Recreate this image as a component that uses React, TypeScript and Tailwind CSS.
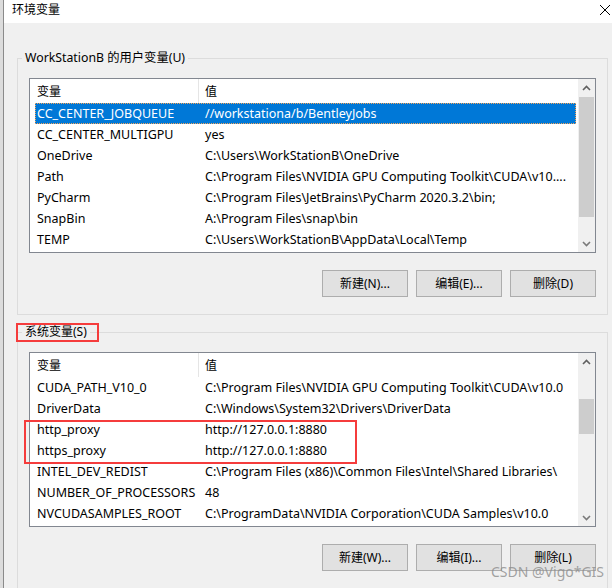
import React from 'react';

type Row = { name: string; value: string; selected?: boolean };

const userRows: Row[] = [
    { name: 'CC_CENTER_JOBQUEUE', value: '//workstationa/b/BentleyJobs', selected: true },
    { name: 'CC_CENTER_MULTIGPU', value: 'yes' },
    { name: 'OneDrive', value: 'C:\\Users\\WorkStationB\\OneDrive' },
    { name: 'Path', value: 'C:\\Program Files\\NVIDIA GPU Computing Toolkit\\CUDA\\v10....' },
    { name: 'PyCharm', value: 'C:\\Program Files\\JetBrains\\PyCharm 2020.3.2\\bin;' },
    { name: 'SnapBin', value: 'A:\\Program Files\\snap\\bin' },
    { name: 'TEMP', value: 'C:\\Users\\WorkStationB\\AppData\\Local\\Temp' },
];

const systemTop: Row[] = [
    { name: 'CUDA_PATH_V10_0', value: 'C:\\Program Files\\NVIDIA GPU Computing Toolkit\\CUDA\\v10.0' },
    { name: 'DriverData', value: 'C:\\Windows\\System32\\Drivers\\DriverData' },
];

const systemProxy: Row[] = [
    { name: 'http_proxy', value: 'http://127.0.0.1:8880' },
    { name: 'https_proxy', value: 'http://127.0.0.1:8880' },
];

const systemBottom: Row[] = [
    { name: 'INTEL_DEV_REDIST', value: 'C:\\Program Files (x86)\\Common Files\\Intel\\Shared Libraries\\' },
    { name: 'NUMBER_OF_PROCESSORS', value: '48' },
    { name: 'NVCUDASAMPLES_ROOT', value: 'C:\\ProgramData\\NVIDIA Corporation\\CUDA Samples\\v10.0' },
];

const ListRow = ({ row }: { row: Row }) => (
    <div
        className={
            row.selected
                ? 'ml-[5px] mr-[2px] h-[21px] pt-[2px] flex items-center text-[12.5px] bg-[#0078d7] text-white outline outline-1 outline-dotted outline-[#f5a55a] -outline-offset-1'
                : 'ml-[5px] mr-[2px] h-[21px] pt-[2px] flex items-center text-[12.5px] text-black'
        }
    >
        <div className="w-[168px] shrink-0 pl-[2px] whitespace-nowrap overflow-hidden">{row.name}</div>
        <div className="flex-1 min-w-0 pl-[2px] whitespace-nowrap overflow-hidden">{row.value}</div>
    </div>
);

const Chevron = ({ down }: { down?: boolean }) => (
    <svg width="9" height="6" viewBox="0 0 9 6">
        <path
            d={down ? 'M1 1 L4.5 4.5 L8 1' : 'M1 5 L4.5 1.5 L8 5'}
            fill="none"
            stroke={down ? '#7a7a7a' : '#606060'}
            strokeWidth="1.6"
        />
    </svg>
);

const ScrollBar = ({ offset, size }: { offset: string; size: string }) => (
    <div className="w-[17px] shrink-0 bg-[#f0f0f0] flex flex-col">
        <div className="h-[17px] flex items-center justify-center">
            <Chevron />
        </div>
        <div className={`mx-[1px] bg-[#cdcdcd] ${offset} ${size}`}></div>
        <div className="flex-1"></div>
        <div className="h-[17px] flex items-center justify-center">
            <Chevron down />
        </div>
    </div>
);

const VarList = ({ children, scroll }: { children: React.ReactNode; scroll: React.ReactNode }) => (
    <div className="mt-[12px] h-[175px] border border-[#828790] bg-white flex">
        <div className="flex-1 min-w-0 flex flex-col">
            <div className="h-[24px] shrink-0 flex items-center">
                <div className="w-[169px] h-full pl-[7px] pt-[1px] flex items-center border-r border-[#e5e5e5]">变量</div>
                <div className="pl-[6px] pt-[1px]">值</div>
            </div>
            {children}
        </div>
        {scroll}
    </div>
);

const Buttons = ({ labels }: { labels: string[] }) => (
    <div className="mt-[17px] flex justify-end gap-[8px]">
        {labels.map((l) => (
            <button
                key={l}
                className="w-[86px] h-[27px] border border-[#adadad] bg-[#e1e1e1] text-[12px] text-black flex items-center justify-center"
            >
                {l}
            </button>
        ))}
    </div>
);

const App: React.FC = () => {
    return (
        <div className="relative w-[612px] h-[588px] overflow-hidden flex bg-[#f0f0f0] text-[12px] text-black font-['Noto_Sans','Noto_Sans_CJK_SC',sans-serif]">
            <div className="w-[3px] shrink-0 bg-[#dcdcdc]"></div>
            <div className="w-px shrink-0 bg-[#8a8a8a]"></div>

            <div className="flex-1 flex flex-col">
                {/* title bar */}
                <div className="h-[23px] shrink-0 bg-white flex items-center justify-between pl-[8px] pr-[1px] pb-[4px]">
                    <span className="leading-[16px]">环境变量</span>
                    <svg width="12" height="12" viewBox="0 0 12 12">
                        <path d="M1 1 L11 11 M11 1 L1 11" stroke="#000" strokeWidth="1" fill="none" />
                    </svg>
                </div>

                <div className="flex-1 pl-[13px] pr-[4px] pt-[27px]">
                    {/* user variables */}
                    <fieldset className="border border-[#dcdcdc] pb-[17px]">
                        <legend className="ml-[4px] px-[3px] leading-[16px] text-[12.3px]">WorkStationB 的用户变量(U)</legend>
                        <div className="mx-[11px]">
                            <VarList scroll={<ScrollBar offset="mt-[1px]" size="h-[120px]" />}>
                                {userRows.map((r) => (
                                    <ListRow key={r.name} row={r} />
                                ))}
                            </VarList>
                            <Buttons labels={['新建(N)...', '编辑(E)...', '删除(D)']} />
                        </div>
                    </fieldset>

                    {/* system variables */}
                    <fieldset className="mt-[9px] border border-[#dcdcdc] pb-[17px]">
                        <legend className="ml-[4px] px-[3px] leading-[16px]">
                            <span className="relative">
                                系统变量(S)
                                <span className="absolute left-[-9px] top-[0px] w-[83px] h-[19px] border-2 border-[#f53c3c]"></span>
                            </span>
                        </legend>
                        <div className="mx-[11px]">
                            <VarList scroll={<ScrollBar offset="mt-[29px]" size="h-[35px]" />}>
                                {systemTop.map((r) => (
                                    <ListRow key={r.name} row={r} />
                                ))}
                                <div className="relative">
                                    {systemProxy.map((r) => (
                                        <ListRow key={r.name} row={r} />
                                    ))}
                                    <div className="absolute left-[-6px] top-[1px] w-[333px] h-[44px] border-2 border-[#f53c3c]"></div>
                                </div>
                                {systemBottom.map((r) => (
                                    <ListRow key={r.name} row={r} />
                                ))}
                            </VarList>
                            <Buttons labels={['新建(W)...', '编辑(I)...', '删除(L)']} />
                        </div>
                    </fieldset>
                </div>
            </div>

            {/* watermark */}
            <span className="absolute left-[491px] top-[563px] text-[14px] leading-[18px] text-[#8c8c8c]/80">CSDN @Vigo*GIS</span>
        </div>
    );
};

export default App;
